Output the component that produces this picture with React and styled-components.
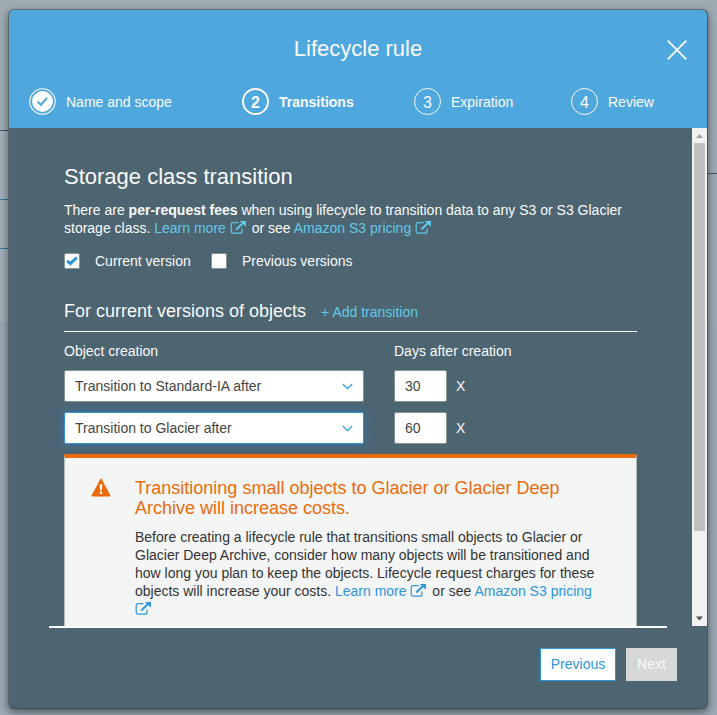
import React from "react";
import styled, { createGlobalStyle } from "styled-components";

const GlobalStyle = createGlobalStyle`
  * { box-sizing: border-box; }
  html, body { margin: 0; height: 100%; overflow: hidden; }
  body {
    font: 14px/18px "Liberation Sans", Arial, sans-serif;
    color: #fafafa;
    background: #9baab4;
  }
  h1, h2, h3, p { margin: 0; font-weight: 400; }
  button { font: inherit; padding: 0; border: 0; background: none; }
`;

const Page = styled.div`
  display: grid;
  grid-template-columns: 8px 700px 9px;
  height: 715px;
  overflow: hidden;
  background: linear-gradient(#a0acb4 322px, #9baab4 322px);
`;

const BackdropColumn = styled.div`
  display: flex;
  flex-direction: column;
`;

const BackdropBand = styled.div`
  height: ${(p) => p.$height}px;
  flex: none;
  background: ${(p) => p.$fill || "transparent"};
`;

const Modal = styled.section`
  position: relative;
  z-index: 1;
  display: flex;
  flex-direction: column;
  height: 700px;
  margin-top: 9px;
  border: 1px solid #5d666c;
  border-color: #65717a #4b5459 #414e57 #5d666c;
  border-radius: 6px;
  background: #4d6471;
  box-shadow: 0 3px 9px rgba(0, 0, 0, 0.5);
  overflow: hidden;
`;

const Header = styled.header`
  flex: none;
  height: 118px;
  background: #4ea8dd;
`;

const TitleBar = styled.div`
  display: grid;
  grid-template-columns: 50px 1fr 50px;
  align-items: center;
  padding-top: 22px;
  height: 56px;
`;

const Title = styled.h1`
  grid-column: 2;
  text-align: center;
  font-size: 22px;
  line-height: 28px;
`;

const CloseButton = styled.button`
  width: 20px;
  height: 20px;
  margin: 1px 0 0 10px;
  svg { display: block; }
`;

const Steps = styled.nav`
  display: grid;
  grid-template-columns: 213px 172px 157px 1fr;
  padding: 22px 0 0 20px;
`;

const Step = styled.div`
  display: flex;
  align-items: center;
  gap: 10px;
  height: 27px;
  font-weight: ${(p) => (p.$active ? 700 : 400)};
`;

const StepCircle = styled.span`
  display: flex;
  align-items: center;
  justify-content: center;
  width: 27px;
  height: 27px;
  border: ${(p) => (p.$active ? 2 : 1)}px solid #fafafa;
  border-radius: 50%;
  font-size: 16px;
  padding-top: 2px;
`;

const StepDone = styled.svg`
  display: block;
  width: 27px;
  height: 27px;
`;

const Body = styled.div`
  display: flex;
  flex: none;
  height: 498px;
  overflow: hidden;
`;

const Content = styled.main`
  flex: none;
  width: 573px;
  margin-left: 55px;
  padding-top: 35px;
`;

const SectionTitle = styled.h2`
  font-size: 22px;
  line-height: 28px;
`;

const Intro = styled.p`
  margin-top: 10px;
`;

const Link = styled.a`
  color: ${(p) => (p.$light ? "#60cbe9" : "#2d95d8")};
  svg { margin-right: 2px; vertical-align: -1px; }
`;

const CheckRow = styled.div`
  display: flex;
  margin-top: 16px;
  height: 16px;
`;

const CheckLabel = styled.label`
  display: flex;
  align-items: center;
  gap: 15px;
  width: 147px;
  white-space: nowrap;
`;

const CheckBox = styled.span`
  display: flex;
  align-items: center;
  justify-content: center;
  width: 16px;
  height: 16px;
  border: 1px solid #879596;
  border-radius: 2px;
  background: #fff;
`;

const GroupHead = styled.div`
  display: flex;
  align-items: baseline;
  gap: 15px;
  height: 63px;
  padding-top: 30px;
  border-bottom: 1px solid #fafafa;
`;

const GroupTitle = styled.h3`
  font-size: 18px;
  line-height: 24px;
`;

const Rules = styled.div`
  display: grid;
  grid-template-columns: 300px 53px 1fr;
  column-gap: 30px;
  row-gap: 10px;
  padding-top: 10px;
`;

const Label = styled.div`
  grid-column: ${(p) => p.$span || "auto"};
  white-space: nowrap;
`;

const Field = styled.div`
  display: flex;
  align-items: center;
  justify-content: space-between;
  height: 32px;
  padding: 0 10px;
  border: 1px solid ${(p) => (p.$focus ? "#2d95d8" : "#879596")};
  border-radius: 2px;
  background: #fff;
  color: #444;
  box-shadow: ${(p) => (p.$focus ? "0 0 12px rgba(45, 130, 210, 0.55)" : "none")};
`;

const RemoveButton = styled.button`
  justify-self: start;
  margin-left: -21px;
  color: #fafafa;
`;

const Warning = styled.aside`
  display: grid;
  grid-template-columns: 70px 460px;
  height: 200px;
  margin-top: 10px;
  border: 1px solid #b5bcbe;
  border-top: 4px solid #eb6a0b;
  background: #f4f6f6;
  color: #333;
`;

const WarningIcon = styled.svg`
  display: block;
  width: 20px;
  height: 19px;
  margin: 20px 0 0 26px;
`;

const WarningTitle = styled.h3`
  margin-top: 20px;
  font-size: 18px;
  line-height: 20px;
  color: #eb6a0b;
`;

const WarningText = styled.p`
  margin-top: 10px;
`;

const ScrollTrack = styled.div`
  display: flex;
  flex-direction: column;
  align-items: center;
  width: 15px;
  margin-left: 55px;
  background: #f1f1f1;
  svg { display: block; flex: none; }
`;

const ScrollThumb = styled.div`
  width: 11px;
  height: 388px;
  margin-bottom: auto;
  background: #c1c1c1;
`;

const Footer = styled.footer`
  display: flex;
  justify-content: flex-end;
  gap: 10px;
  width: 618px;
  margin-left: 40px;
  padding-top: 20px;
  border-top: 2px solid #fff;
`;

const FooterButton = styled.button`
  flex: none;
  width: ${(p) => p.$width}px;
  height: 33px;
  padding-bottom: 2px;
  border: 1px solid ${(p) => (p.$disabled ? "#d5d8d7" : "#2d95d8")};
  background: ${(p) => (p.$disabled ? "#d5d8d7" : "#fff")};
  color: ${(p) => (p.$disabled ? "#fafafa" : "#2d95d8")};
  &:last-child { margin-right: -10px; }
`;

const ExternalIcon = () => (
  <svg width="16" height="13" viewBox="0 0 16 13" fill="none">
    <path d="M8.5 1.6H3Q1.2 1.6 1.2 3.4V10.4Q1.2 12.2 3 12.2H10Q12 12.2 12 10.2V7.5" stroke="currentColor" strokeWidth="1.2" />
    <path d="M6.3 8.5L12.7 2.3" stroke="currentColor" strokeWidth="2" />
    <path d="M9.8 0H16V5.8Z" fill="currentColor" />
  </svg>
);

const Chevron = () => (
  <svg width="11" height="7" viewBox="0 0 11 7" fill="none" stroke="#2d95d8" strokeWidth="1.2">
    <path d="M.8 1L5.5 5.6L10.2 1" />
  </svg>
);

const ScrollArrow = ({ down }) => (
  <svg width="15" height="15" viewBox="0 0 15 15">
    {down ? <path d="M4 5.5H11L7.5 9.5Z" fill="#505050" /> : <path d="M4 10H11L7.5 6Z" fill="#a3a3a3" />}
  </svg>
);

const steps = ["Transitions", "Expiration", "Review"];
const rules = [
  { name: "Transition to Standard-IA after", days: 30 },
  { name: "Transition to Glacier after", days: 60, focus: true },
];

export default function App() {
  return (
    <>
      <GlobalStyle />
      <Page>
        <BackdropColumn>
          <BackdropBand $height={130} />
          <BackdropBand $height={1} $fill="#405866" />
          <BackdropBand $height={68} $fill="#a4b1b8" />
          <BackdropBand $height={1} $fill="#3478a4" />
          <BackdropBand $height={48} $fill="#a4b1b8" />
          <BackdropBand $height={1} $fill="#3478a4" />
          <BackdropBand $height={73} $fill="#a4b1b8" />
        </BackdropColumn>
        <Modal>
          <Header>
            <TitleBar>
              <Title>Lifecycle rule</Title>
              <CloseButton aria-label="Close">
                <svg width="20" height="20" viewBox="0 0 20 20" stroke="#fafafa" strokeWidth="1.8">
                  <path d="M.7 .7L19.3 19.3M19.3 .7L.7 19.3" />
                </svg>
              </CloseButton>
            </TitleBar>
            <Steps>
              <Step>
                <StepDone viewBox="0 0 27 27">
                  <circle cx="13.5" cy="13.5" r="12.7" fill="none" stroke="#fafafa" strokeWidth="1.1" />
                  <circle cx="13.5" cy="13.5" r="10.4" fill="#fff" />
                  <path d="M8.6 13.6L11.9 17L18 9.8" fill="none" stroke="#4ea8dd" strokeWidth="2" />
                </StepDone>
                Name and scope
              </Step>
              {steps.map((name, i) => (
                <Step key={name} $active={i === 0}>
                  <StepCircle $active={i === 0}>{i + 2}</StepCircle>
                  {name}
                </Step>
              ))}
            </Steps>
          </Header>
          <Body>
            <Content>
              <SectionTitle>Storage class transition</SectionTitle>
              <Intro>
                There are <b>per-request fees</b> when using lifecycle to transition data to any S3 or S3 Glacier
                storage class. <Link $light>Learn more <ExternalIcon /></Link> or see{" "}
                <Link $light>Amazon S3 pricing <ExternalIcon /></Link>
              </Intro>
              <CheckRow>
                <CheckLabel>
                  <CheckBox>
                    <svg width="12" height="10" viewBox="0 0 12 10" fill="none" stroke="#2d95d8" strokeWidth="3">
                      <path d="M1.2 4.8L4.3 7.7L10.8 1.5" />
                    </svg>
                  </CheckBox>
                  Current version
                </CheckLabel>
                <CheckLabel>
                  <CheckBox />
                  Previous versions
                </CheckLabel>
              </CheckRow>
              <GroupHead>
                <GroupTitle>For current versions of objects</GroupTitle>
                <Link $light>+ Add transition</Link>
              </GroupHead>
              <Rules>
                <Label>Object creation</Label>
                <Label $span="2 / 4">Days after creation</Label>
                {rules.map((rule) => (
                  <React.Fragment key={rule.name}>
                    <Field $focus={rule.focus}>
                      {rule.name}
                      <Chevron />
                    </Field>
                    <Field>{rule.days}</Field>
                    <RemoveButton>X</RemoveButton>
                  </React.Fragment>
                ))}
              </Rules>
              <Warning>
                <WarningIcon viewBox="0 0 20 19">
                  <path d="M10 .8L19.2 18H.8Z" fill="#eb6a0b" stroke="#eb6a0b" strokeLinejoin="round" />
                  <path d="M8.7 6.2H11.3L10.9 12.3H9.1ZM8.8 13.6H11.2V16H8.8Z" fill="#fff" />
                </WarningIcon>
                <div>
                  <WarningTitle>Transitioning small objects to Glacier or Glacier Deep Archive will increase costs.</WarningTitle>
                  <WarningText>
                    Before creating a lifecycle rule that transitions small objects to Glacier or Glacier Deep Archive,
                    consider how many objects will be transitioned and how long you plan to keep the objects. Lifecycle
                    request charges for these objects will increase your costs.{" "}
                    <Link>Learn more <ExternalIcon /></Link> or see <Link>Amazon S3 pricing <ExternalIcon /></Link>
                  </WarningText>
                </div>
              </Warning>
            </Content>
            <ScrollTrack>
              <ScrollArrow />
              <ScrollThumb />
              <ScrollArrow down />
            </ScrollTrack>
          </Body>
          <Footer>
            <FooterButton $width={76}>Previous</FooterButton>
            <FooterButton $width={51} $disabled>Next</FooterButton>
          </Footer>
        </Modal>
        <BackdropColumn>
          <BackdropBand $height={173} />
          <BackdropBand $height={1} $fill="#405866" />
        </BackdropColumn>
      </Page>
    </>
  );
}
